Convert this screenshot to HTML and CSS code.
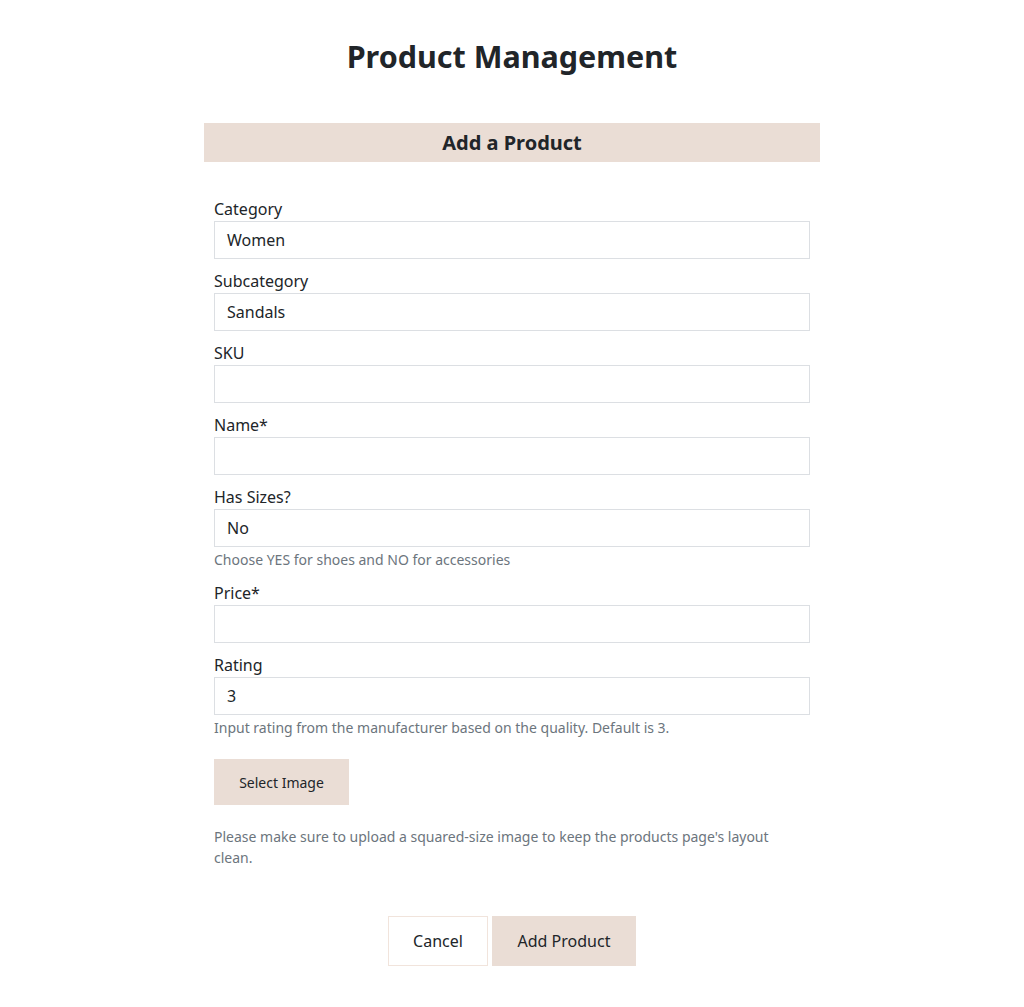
FILE: index.html
```html
<!DOCTYPE html>
<html lang="en">
<head>
<meta charset="utf-8">
<title>Product Management</title>
<link rel="stylesheet" href="styles.css">
</head>
<body>
<main class="page">
  <h1 class="title">Product Management</h1>
  <section class="card">
    <h2 class="card-header">Add a Product</h2>
    <form class="form">
      <div class="field">
        <label class="label">Category</label>
        <div class="input">Women</div>
      </div>
      <div class="field">
        <label class="label">Subcategory</label>
        <div class="input">Sandals</div>
      </div>
      <div class="field">
        <label class="label">SKU</label>
        <div class="input"></div>
      </div>
      <div class="field">
        <label class="label">Name*</label>
        <div class="input"></div>
      </div>
      <div class="field">
        <label class="label">Has Sizes?</label>
        <div class="input">No</div>
        <p class="help">Choose YES for shoes and NO for accessories</p>
      </div>
      <div class="field">
        <label class="label">Price*</label>
        <div class="input"></div>
      </div>
      <div class="field">
        <label class="label">Rating</label>
        <div class="input">3</div>
        <p class="help">Input rating from the manufacturer based on the quality. Default is 3.</p>
      </div>
      <div class="upload">
        <button type="button" class="btn-select">Select Image</button>
        <p class="help help-upload">Please make sure to upload a squared-size image to keep the products page's layout clean.</p>
      </div>
      <div class="actions">
        <button type="button" class="btn btn-cancel">Cancel</button>
        <button type="button" class="btn btn-primary">Add Product</button>
      </div>
    </form>
  </section>
</main>
</body>
</html>
```
FILE: styles.css
```css
* { box-sizing: border-box; }
html, body { margin: 0; padding: 0; background: #fff; }
body {
  font-family: "Noto Sans", "Open Sans", sans-serif;
  color: #212529;
  font-size: 16px;
  line-height: 1.5;
}
.page {
  width: 616px;
  margin: 0 auto;
  padding-top: 38px;
}
.title {
  margin: 0;
  text-align: center;
  font-size: 30.5px;
  line-height: 36px;
  font-weight: 700;
}
.card { margin-top: 49px; }
.card-header {
  margin: 0;
  background: #eaddd5;
  text-align: center;
  font-size: 20px;
  font-weight: 700;
  line-height: 24px;
  padding: 8px 0 7px;
}
.form {
  padding: 35px 10px 0;
}
.field { margin-bottom: 10px; }
.label {
  display: block;
  line-height: 24px;
}
.input {
  height: 38px;
  border: 1px solid #dcdfe3;
  padding: 0 12px;
  line-height: 36px;
  font-size: 16px;
}
.help {
  margin: 2px 0 0;
  font-size: 14px;
  line-height: 22px;
  color: #6c757d;
}
.upload { padding-top: 10px; }
.btn-select {
  display: block;
  width: 135px;
  height: 46px;
  border: 0;
  background: #eaddd5;
  font-family: inherit;
  font-size: 14px;
  color: #212529;
  padding: 0;
}
.help-upload { margin-top: 21px; line-height: 21px; }
.actions {
  display: flex;
  justify-content: center;
  gap: 4px;
  margin-top: 48px;
}
.btn {
  height: 50px;
  font-family: inherit;
  font-size: 16px;
  color: #212529;
  padding: 0;
}
.btn-cancel {
  width: 100px;
  background: #fff;
  border: 1px solid #f1e4dc;
}
.btn-primary {
  width: 144px;
  background: #eaddd5;
  border: 1px solid #eaddd5;
}
```
